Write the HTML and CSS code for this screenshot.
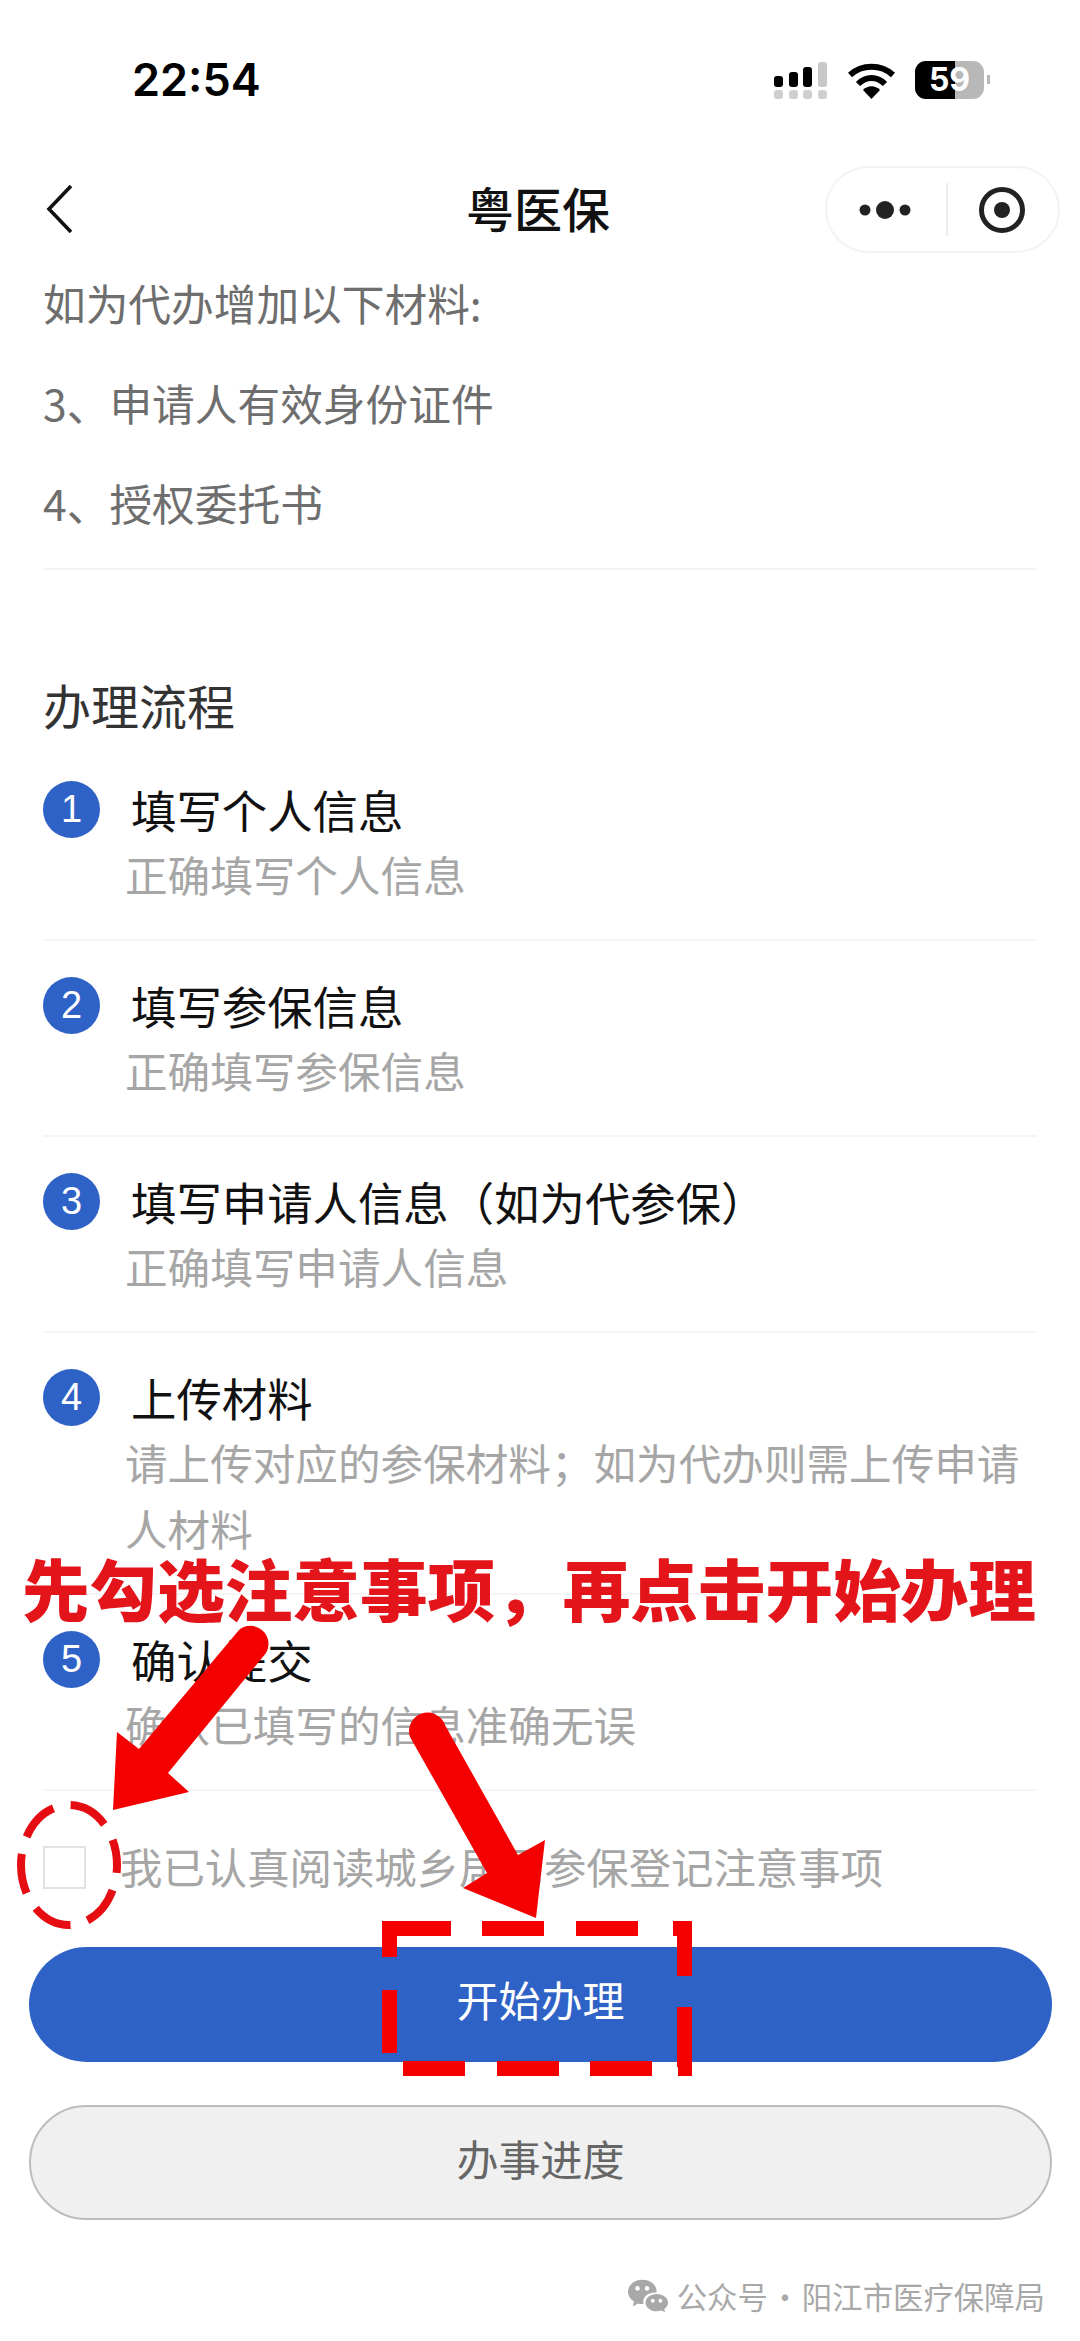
FILE: index.html
```html
<!DOCTYPE html>
<html lang="zh-CN">
<head>
	<meta charset="utf-8">
	<title>粤医保</title>
	<link rel="stylesheet" href="styles.css">
</head>
<body>
<div class="page">

	<div class="statusbar">
		<span class="time">22:54</span>
		<div class="status-icons">
			<svg class="signal" width="54" height="38" viewBox="0 0 54 38">
				<rect x="0" y="15" width="9" height="11" rx="3" fill="#000"/>
				<rect x="15" y="11" width="9" height="15" rx="3" fill="#000"/>
				<rect x="29" y="6" width="9" height="20" rx="3" fill="#000"/>
				<rect x="44" y="1" width="9" height="25" rx="3" fill="#c8c8c8"/>
				<rect x="0" y="29" width="9" height="9" rx="3" fill="#cfcfcf"/>
				<rect x="15" y="29" width="9" height="9" rx="3" fill="#cfcfcf"/>
				<rect x="29" y="29" width="9" height="9" rx="3" fill="#cfcfcf"/>
				<rect x="44" y="29" width="9" height="9" rx="3" fill="#cfcfcf"/>
			</svg>
			<svg class="wifi" width="47" height="36" viewBox="0 0 47 36">
				<path d="M2 12 C14 1 33 1 45 12" fill="none" stroke="#000" stroke-width="6"/>
				<path d="M10 21 C18 13 29 13 37 21" fill="none" stroke="#000" stroke-width="6"/>
				<path d="M15 27 C20 22 27 22 32 27 L23.5 36 Z" fill="#000"/>
			</svg>
			<div class="battery">
				<div class="battery-fill"></div>
				<span class="battery-num">59</span>
			</div>
			<div class="battery-nub"></div>
		</div>
	</div>

	<div class="navbar">
		<svg class="back" width="28" height="50" viewBox="0 0 28 50">
			<path d="M25 2 L3 25 L25 48" fill="none" stroke="#111" stroke-width="3.6"/>
		</svg>
		<h1 class="nav-title">粤医保</h1>
		<div class="capsule">
			<svg width="60" height="24" viewBox="0 0 60 24">
				<circle cx="9" cy="12" r="5.5" fill="#222"/>
				<circle cx="29" cy="12" r="9" fill="#222"/>
				<circle cx="49" cy="12" r="5.5" fill="#222"/>
			</svg>
			<div class="capsule-line"></div>
			<svg width="48" height="48" viewBox="0 0 48 48">
				<circle cx="24" cy="24" r="20.5" fill="none" stroke="#222" stroke-width="5"/>
				<circle cx="24" cy="24" r="8" fill="#222"/>
			</svg>
		</div>
	</div>

	<div class="content">
		<div class="materials">
			<p>如为代办增加以下材料:</p>
			<p>3、申请人有效身份证件</p>
			<p>4、授权委托书</p>
		</div>

		<h2 class="section-title">办理流程</h2>

		<div class="step">
			<div class="step-head"><span class="badge">1</span><span class="step-title">填写个人信息</span></div>
			<p class="step-sub">正确填写个人信息</p>
		</div>
		<div class="step">
			<div class="step-head"><span class="badge">2</span><span class="step-title">填写参保信息</span></div>
			<p class="step-sub">正确填写参保信息</p>
		</div>
		<div class="step">
			<div class="step-head"><span class="badge">3</span><span class="step-title">填写申请人信息（如为代参保）</span></div>
			<p class="step-sub">正确填写申请人信息</p>
		</div>
		<div class="step">
			<div class="step-head"><span class="badge">4</span><span class="step-title">上传材料</span></div>
			<p class="step-sub">请上传对应的参保材料；如为代办则需上传申请人材料</p>
		</div>
		<div class="step">
			<div class="step-head"><span class="badge">5</span><span class="step-title">确认提交</span></div>
			<p class="step-sub">确认已填写的信息准确无误</p>
		</div>

		<div class="agree">
			<span class="checkbox"></span>
			<span class="agree-text">我已认真阅读城乡居民参保登记注意事项</span>
		</div>
	</div>

	<div class="actions">
		<div class="btn btn-primary">开始办理</div>
		<div class="btn btn-plain">办事进度</div>
	</div>

	<div class="watermark">
		<svg width="40" height="34" viewBox="0 0 42 34">
			<path d="M15 0 C23 0 30 5 30 12 C30 12.500 30 13 29.900 13.300 C23 12.500 16 16.500 16 23 C16 24 16.200 24.800 16.400 25.500 C15.900 25.500 15.400 25.500 15 25.500 C13.300 25.500 11.800 25.300 10.400 24.900 L5 28 L6.300 22.700 C2.500 20.300 0 16.500 0 12.500 C0 5.500 6.800 0 15 0 Z" fill="#a8a8a8"/>
			<path d="M30 15 C36.500 15 42 19 42 24 C42 26.800 40.400 29 38 30.800 L39 34 L35 32.200 C33.500 32.700 31.800 33 30 33 C23.500 33 18.500 29 18.500 24 C18.500 19 23.500 15 30 15 Z" fill="#a8a8a8"/>
			<circle cx="10" cy="9" r="2.400" fill="#fff"/>
			<circle cx="20" cy="9" r="2.400" fill="#fff"/>
			<circle cx="26" cy="22" r="2" fill="#fff"/>
			<circle cx="34" cy="22" r="2" fill="#fff"/>
		</svg>
		<span>公众号 · 阳江市医疗保障局</span>
	</div>

	<!-- 红色标注，盖在页面上面 -->
	<div class="notice">先勾选注意事项，再点击开始办理</div>
	<svg class="marks" width="1080" height="2341" viewBox="0 0 1080 2341">
		<ellipse cx="69" cy="1865" rx="48" ry="60" fill="none" stroke="#e60d12" stroke-width="8" stroke-dasharray="40 17.700" stroke-dashoffset="32"/>

		<path d="M239 1630 A18 18 0 0 1 266 1653 L168 1773 L189 1792 L113 1810 L117 1732 L139 1749 Z" fill="#f50000"/>
		<path d="M410 1737 A18 18 0 0 1 445 1725 L518 1855 L545 1840 L536 1918 L463 1888 L487 1873 Z" fill="#f50000"/>

		<g fill="#f50000">
			<rect x="382" y="1921" width="69" height="15"/>
			<rect x="482" y="1921" width="62" height="15"/>
			<rect x="576" y="1921" width="62" height="15"/>
			<rect x="673" y="1921" width="19" height="15"/>
			<rect x="403" y="2061" width="62" height="15"/>
			<rect x="497" y="2061" width="62" height="15"/>
			<rect x="590" y="2061" width="62" height="15"/>
			<rect x="678" y="2061" width="14" height="15"/>
			<rect x="382" y="1921" width="15" height="36"/>
			<rect x="382" y="1990" width="15" height="63"/>
			<rect x="677" y="1921" width="15" height="55"/>
			<rect x="677" y="2007" width="15" height="60"/>
		</g>
	</svg>
</div>
</body>
</html>
```

FILE: styles.css
```css
* {
	box-sizing: border-box;
}
body {
	margin: 0;
	background: #fff;
	font-family: "Noto Sans CJK SC", "Noto Sans", sans-serif;
}
p, h1, h2 {
	margin: 0;
	font-weight: 400;
}
.page {
	position: relative;
	width: 1080px;
	height: 2341px;
	overflow: hidden;
	background: #fff;
}

/* status bar */
.statusbar {
	height: 160px;
	padding: 54px 0 0 132px;
	display: flex;
	align-items: flex-start;
	justify-content: space-between;
}
.time {
	font-family: Inter, "Liberation Sans", sans-serif;
	font-size: 45px;
	font-weight: 600;
	line-height: 52px;
	color: #000;
}
.status-icons {
	display: flex;
	align-items: flex-start;
	padding: 7px 90px 0 0;
}
.wifi {
	margin: 2px 0 0 20px;
}
.battery {
	position: relative;
	width: 69px;
	height: 38px;
	margin-left: 20px;
	border-radius: 11px;
	overflow: hidden;
	background: #b8b8b8;
	text-align: center;
}
.battery-fill {
	position: absolute;
	left: 0;
	top: 0;
	bottom: 0;
	width: 40px;
	background: #000;
}
.battery-num {
	position: relative;
	font-family: Inter, "Liberation Sans", sans-serif;
	font-size: 32px;
	font-weight: 700;
	line-height: 38px;
	color: #fff;
}
.battery-nub {
	width: 3px;
	height: 9px;
	margin: 14px 0 0 3px;
	background: #b8b8b8;
}

/* nav */
.navbar {
	position: relative;
	height: 96px;
	display: flex;
	align-items: center;
	justify-content: center;
}
.back {
	position: absolute;
	left: 46px;
	top: 24px;
}
.nav-title {
	margin: -2px 4px 0 0;
	font-size: 48px;
	font-weight: 500;
	line-height: 96px;
	color: #111;
}
.capsule {
	position: absolute;
	right: 20px;
	top: 6px;
	width: 235px;
	height: 87px;
	padding: 0 32px 0 29px;
	display: flex;
	align-items: center;
	justify-content: space-between;
	border: 2px solid #f3f3f3;
	border-radius: 44px;
	background: #fff;
}
.capsule-line {
	width: 2px;
	height: 53px;
	background: #ececec;
}

/* content */
.content {
	padding: 0 43px;
}
.materials {
	margin-top: -4px;
	padding-bottom: 16px;
	border-bottom: 2px solid #f5f5f5;
}
.materials p {
	height: 100px;
	font-size: 42.7px;
	line-height: 100px;
	color: #6e6e6e;
}
.section-title {
	height: 64px;
	margin-top: 102px;
	font-size: 48px;
	line-height: 64px;
	color: #333;
}
.step {
	padding: 31px 0 32px;
	border-bottom: 2px solid #f5f5f5;
}
.section-title + .step {
	padding-top: 40px;
}
.step-head {
	height: 66px;
	display: flex;
	align-items: center;
	gap: 31px;
}
.badge {
	width: 57px;
	height: 57px;
	flex: none;
	border-radius: 50%;
	background: #2f62c7;
	font-family: "Liberation Sans", sans-serif;
	font-size: 38px;
	line-height: 57px;
	text-align: center;
	color: #fff;
}
.step-title {
	font-size: 45.4px;
	line-height: 66px;
	color: #111;
}
.step-sub {
	margin-top: -1px;
	padding-left: 82px;
	font-size: 42.6px;
	line-height: 66px;
	color: #a6a6a6;
}
.agree {
	height: 156px;
	display: flex;
	align-items: center;
	gap: 34px;
}
.checkbox {
	width: 43px;
	height: 43px;
	flex: none;
	margin-bottom: 3px;
	border: 2px solid #e2e2e2;
	background: #fff;
}
.agree-text {
	margin-bottom: 8px;
	font-size: 42.4px;
	color: #a6a6a6;
}

/* buttons */
.actions {
	padding: 0 28px 0 29px;
	display: flex;
	flex-direction: column;
	gap: 43px;
}
.btn {
	height: 115px;
	border-radius: 58px;
	font-size: 42px;
	line-height: 103px;
	text-align: center;
}
.btn-primary {
	background: #2f62c7;
	color: #fff;
}
.btn-plain {
	border: 2px solid #bdbdbd;
	background: #f0f0f0;
	color: #666;
	line-height: 101px;
}

.watermark {
	margin-top: 55px;
	padding-right: 35px;
	display: flex;
	align-items: center;
	justify-content: flex-end;
	gap: 9px;
	font-size: 30.4px;
	line-height: 42px;
	word-spacing: -5px;
	color: #a8a8a8;
}

/* overlay marks */
.notice {
	position: absolute;
	left: 22px;
	top: 1539px;
	font-size: 67.600px;
	font-weight: 900;
	line-height: 96px;
	white-space: nowrap;
	color: #e3141a;
}
.marks {
	position: absolute;
	left: 0;
	top: 0;
	pointer-events: none;
}
```
